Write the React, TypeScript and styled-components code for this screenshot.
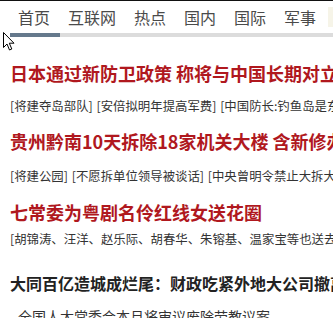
import React from "react";
import styled, { createGlobalStyle } from "styled-components";

const Global = createGlobalStyle`
  html, body { margin: 0; padding: 0; background: #fff; }
  body { font-family: "Noto Sans CJK SC", "Noto Sans", sans-serif; overflow: hidden; }
`;

const Page = styled.div`
  position: relative;
  width: 333px;
  height: 318px;
  overflow: hidden;
  border-top: 1px solid #111;
  box-sizing: border-box;
`;

const Nav = styled.nav`
  display: flex;
  gap: 18px;
  padding-left: 18px;
  height: 32px;
  align-items: center;
  white-space: nowrap;
`;

const Tab = styled.span`
  font-size: 16px;
  line-height: 20px;
  color: #4a4a4a;
`;

const TabHighlight = styled.span`
  flex: none;
  width: 20px;
  height: 20px;
  margin-left: -6px;
  background: #f6f4e8;
`;

const Track = styled.div`
  margin-left: 10px;
  height: 4px;
  background: #dcdcdc;
`;

const Fill = styled.div`
  height: 100%;
  background: #65798c;
`;

const List = styled.div`
  padding-left: 10px;
`;

const Headline = styled.div<{ $mt: number; $dark?: boolean }>`
  margin-top: ${(p) => p.$mt}px;
  font-size: ${(p) => (p.$dark ? 16 : 18)}px;
  line-height: 24px;
  font-weight: 700;
  color: ${(p) => (p.$dark ? "#222" : "#b0181e")};
  white-space: nowrap;
`;

const Sub = styled.div<{ $mt: number; $indent?: boolean }>`
  margin-top: ${(p) => p.$mt}px;
  padding-left: ${(p) => (p.$indent ? "8px" : "0")};
  font-size: ${(p) => (p.$indent ? "14px" : "12.4px")};
  word-spacing: 1px;
  line-height: 20px;
  color: #333;
  white-space: nowrap;
`;

const Cursor = styled.svg`
  position: absolute;
  left: 3px;
  top: 31px;
`;

const stories = [
  {
    title: "日本通过新防卫政策 称将与中国长期对立",
    sub: "[将建夺岛部队] [安倍拟明年提高军费] [中国防长:钓鱼岛是东海]",
    hm: 24,
    sm: 11,
  },
  {
    title: "贵州黔南10天拆除18家机关大楼 含新修办公楼",
    sub: "[将建公园] [不愿拆单位领导被谈话] [中央曾明令禁止大拆大建]",
    hm: 13,
    sm: 13,
  },
  {
    title: "七常委为粤剧名伶红线女送花圈",
    sub: "[胡锦涛、汪洋、赵乐际、胡春华、朱镕基、温家宝等也送去花圈]",
    hm: 14,
    sm: 5,
  },
  {
    title: "大同百亿造城成烂尾：财政吃紧外地大公司撤离",
    sub: "全国人大常委会本月将审议废除劳教议案",
    hm: 22,
    sm: 11,
    dark: true,
    indent: true,
  },
];

export default function App() {
  return (
    <Page>
      <Global />
      <Nav>
        {["首页", "互联网", "热点", "国内", "国际", "军事"].map((t) => (
          <Tab key={t}>{t}</Tab>
        ))}
        <TabHighlight />
      </Nav>
      <Track>
        <Fill style={{ width: 50 }} />
      </Track>
      <List>
        {stories.map((s) => (
          <React.Fragment key={s.title}>
            <Headline $mt={s.hm} $dark={s.dark}>
              {s.title}
            </Headline>
            <Sub $mt={s.sm} $indent={s.indent}>
              {s.sub}
            </Sub>
          </React.Fragment>
        ))}
      </List>
      <Cursor width="12" height="19" viewBox="0 0 12 19">
        <path
          d="M0.5 0.5 L0.5 15.5 L4 12 L6.5 18 L8.8 17 L6.3 11.2 L11 11.2 Z"
          fill="#fff"
          stroke="#000"
          strokeWidth="1"
          strokeLinejoin="miter"
        />
      </Cursor>
    </Page>
  );
}
